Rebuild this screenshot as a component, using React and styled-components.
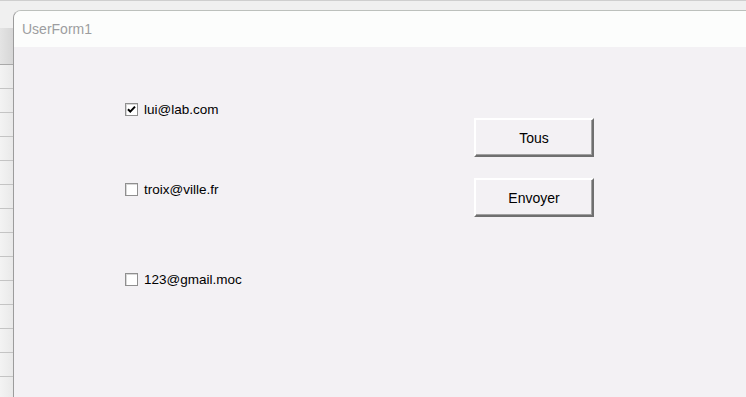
import React from 'react';
import styled, { createGlobalStyle } from 'styled-components';

const GlobalStyle = createGlobalStyle`
  html, body {
    margin: 0;
    padding: 0;
    height: 100%;
    overflow: hidden;
    background: #efefef;
  }
  #root {
    height: 100%;
  }
`;

const Screen = styled.div`
  width: 746px;
  height: 397px;
  display: grid;
  grid-template-columns: 13px 1fr;
  grid-template-rows: 9px 1fr;
  background: #f0f0f0;
  border-top: 1px solid #cfcfcf;
  box-sizing: border-box;
  overflow: hidden;
  font-family: 'Liberation Sans', Arial, sans-serif;
`;

const Gutter = styled.div`
  grid-row: 1 / 3;
  grid-column: 1;
  display: flex;
  flex-direction: column;
`;

const GutterTop = styled.div`
  height: 27px;
  flex-shrink: 0;
  background: #f0f0f0;
`;

const GutterHeader = styled.div`
  height: 36px;
  flex-shrink: 0;
  background: linear-gradient(to right, #e4e4e4, #d6d6d6);
  border-bottom: 1px solid #a9a9a9;
`;

const GutterRow = styled.div`
  height: 23px;
  flex-shrink: 0;
  background: linear-gradient(to right, #f3f3f3, #e9e9e9);
  border-bottom: 1px solid #c4c4c4;
`;

const TopStrip = styled.div`
  grid-row: 1;
  grid-column: 2;
  background: #f0f0f0;
`;

const Window = styled.div`
  grid-row: 2;
  grid-column: 2;
  display: flex;
  flex-direction: column;
  border-left: 1px solid #9c9c9c;
  border-top: 1px solid #bcc0bc;
  border-top-left-radius: 8px;
  overflow: hidden;
  background: #f3f1f4;
`;

const TitleBar = styled.div`
  height: 36px;
  flex-shrink: 0;
  background: #fcfdfc;
  display: flex;
  align-items: center;
  padding-left: 8px;
  font-size: 14px;
  color: #9d9da0;
`;

const Body = styled.div`
  flex: 1;
  display: flex;
  background: #f3f1f4;
`;

const CheckColumn = styled.div`
  width: 349px;
  padding-left: 111px;
  display: flex;
  flex-direction: column;
`;

const CheckRow = styled.label`
  display: flex;
  align-items: center;
  gap: 6px;
  height: 16px;
  margin-top: ${({ $top }) => $top}px;
  font-size: 13.5px;
  color: #000;
`;

const Box = styled.span`
  width: 11px;
  height: 11px;
  flex-shrink: 0;
  background: #fff;
  border: 1px solid #8f8f8f;
  box-shadow: inset 1px 1px 0 #d8d8d8;
  display: flex;
  align-items: center;
  justify-content: center;
`;

const ButtonColumn = styled.div`
  display: flex;
  flex-direction: column;
  padding-top: 71px;
  gap: 21px;
`;

const Button = styled.button`
  width: 120px;
  height: 39px;
  box-sizing: border-box;
  padding: 0;
  margin: 0;
  background: #f3f1f4;
  border-top: 2px solid #ffffff;
  border-left: 2px solid #ffffff;
  border-right: 2px solid #6f6f6f;
  border-bottom: 2px solid #6f6f6f;
  box-shadow: inset -1px -1px 0 #a0a0a0;
  font-family: 'Liberation Sans', Arial, sans-serif;
  font-size: 14px;
  color: #000;
`;

const Tick = () => (
  <svg width="9" height="9" viewBox="0 0 9 9">
    <path d="M1 4.2 L3.3 6.6 L8 1.6" fill="none" stroke="#000" strokeWidth="2" />
  </svg>
);

const emails = [
  { label: 'lui@lab.com', checked: true, top: 54 },
  { label: 'troix@ville.fr', checked: false, top: 64 },
  { label: '123@gmail.moc', checked: false, top: 74 },
];

export default function App() {
  return (
    <>
      <GlobalStyle />
      <Screen>
        <Gutter>
          <GutterTop />
          <GutterHeader />
          {Array.from({ length: 14 }).map((_, i) => (
            <GutterRow key={i} />
          ))}
        </Gutter>
        <TopStrip />
        <Window>
          <TitleBar>UserForm1</TitleBar>
          <Body>
            <CheckColumn>
              {emails.map((e) => (
                <CheckRow key={e.label} $top={e.top}>
                  <Box>{e.checked && <Tick />}</Box>
                  {e.label}
                </CheckRow>
              ))}
            </CheckColumn>
            <ButtonColumn>
              <Button>Tous</Button>
              <Button>Envoyer</Button>
            </ButtonColumn>
          </Body>
        </Window>
      </Screen>
    </>
  );
}
